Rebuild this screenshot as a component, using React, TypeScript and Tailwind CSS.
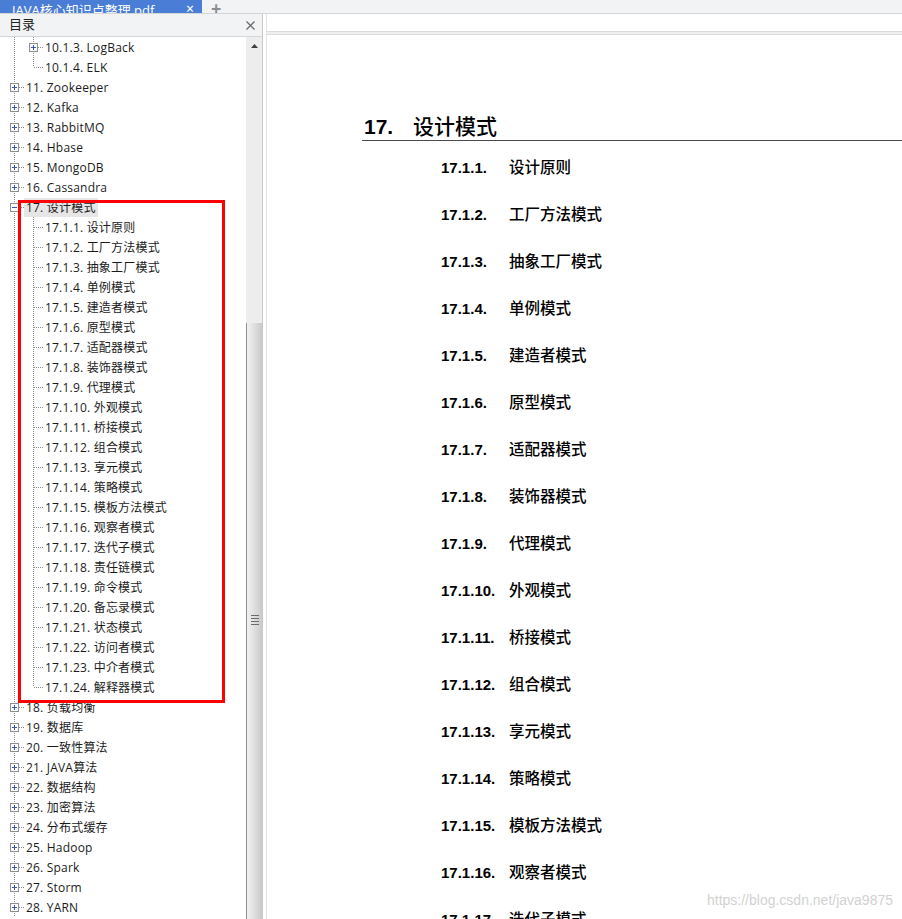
import type { ReactNode } from "react";

const subs = [
  "设计原则",
  "工厂方法模式",
  "抽象工厂模式",
  "单例模式",
  "建造者模式",
  "原型模式",
  "适配器模式",
  "装饰器模式",
  "代理模式",
  "外观模式",
  "桥接模式",
  "组合模式",
  "享元模式",
  "策略模式",
  "模板方法模式",
  "观察者模式",
  "迭代子模式",
  "责任链模式",
  "命令模式",
  "备忘录模式",
  "状态模式",
  "访问者模式",
  "中介者模式",
  "解释器模式",
];

const before = ["11. Zookeeper", "12. Kafka", "13. RabbitMQ", "14. Hbase", "15. MongoDB", "16. Cassandra"];
const after = [
  "18. 负载均衡",
  "19. 数据库",
  "20. 一致性算法",
  "21. JAVA算法",
  "22. 数据结构",
  "23. 加密算法",
  "24. 分布式缓存",
  "25. Hadoop",
  "26. Spark",
  "27. Storm",
  "28. YARN",
];

const treeFont = { fontFamily: '"Open Sans", "Noto Sans CJK SC", sans-serif' };
const arial = { fontFamily: '"Liberation Sans", Arial, sans-serif' };
const hei = { fontFamily: '"Noto Sans CJK SC", sans-serif' };

function Box({ x, open }: { x: number; open?: boolean }) {
  return (
    <g>
      <rect x={x + 0.5} y={6.5} width={8} height={8} fill="#fbfbfb" stroke="#8e8f94" />
      <line x1={x + 2} y1={10.5} x2={x + 7} y2={10.5} stroke="#3c55a8" />
      {!open && <line x1={x + 4.5} y1={8} x2={x + 4.5} y2={13} stroke="#3c55a8" />}
    </g>
  );
}

function Gutter({ level, expander, last }: { level: 0 | 1; expander?: "+" | "-"; last?: boolean }) {
  const w = level === 0 ? 26 : 45;
  const dot = { stroke: "#8a8a8a", strokeDasharray: "1 1" };
  return (
    <svg width={w} height={20} className="shrink-0">
      <line x1={14.5} y1={0} x2={14.5} y2={20} {...dot} />
      {level === 0 && <line x1={19} y1={10.5} x2={25} y2={10.5} {...dot} />}
      {level === 0 && expander && <Box x={10} open={expander === "-"} />}
      {level === 1 && (
        <>
          <line x1={33.5} y1={0} x2={33.5} y2={last ? 10 : 20} {...dot} />
          <line x1={34} y1={10.5} x2={44} y2={10.5} {...dot} />
          {expander && <Box x={29} />}
        </>
      )}
    </svg>
  );
}

function Row({ children, gutter, selected }: { children: ReactNode; gutter: ReactNode; selected?: boolean }) {
  return (
    <div className="flex h-[20px] items-center text-[12px] text-[#1b1b1b]">
      {gutter}
      <span
        className={
          selected
            ? "-ml-[2px] bg-[#e6e6e6] px-[2px] leading-[19px] tracking-[0.2px]"
            : "leading-[19px] tracking-[0.2px]"
        }
      >
        {children}
      </span>
    </div>
  );
}

function Sidebar() {
  return (
    <div className="flex w-[263px] shrink-0 flex-col border-r border-[#c9c9c9] bg-white">
      <div className="flex h-[23px] items-center justify-between border-b border-[#d6d7da] bg-[#f2f3f5] pl-[9px] pr-[7px]">
        <span className="text-[13px] text-[#222]" style={treeFont}>
          目录
        </span>
        <svg width="9" height="9" viewBox="0 0 9 9">
          <path d="M0.5 0.5 L8.5 8.5 M8.5 0.5 L0.5 8.5" stroke="#6b6b6b" strokeWidth="1.3" />
        </svg>
      </div>
      <div className="flex min-h-0 flex-1">
        <div className="relative flex-1 overflow-hidden" style={treeFont}>
          <Row gutter={<Gutter level={1} expander="+" />}>10.1.3. LogBack</Row>
          <Row gutter={<Gutter level={1} last />}>10.1.4. ELK</Row>
          {before.map((t) => (
            <Row key={t} gutter={<Gutter level={0} expander="+" />}>
              {t}
            </Row>
          ))}
          <Row gutter={<Gutter level={0} expander="-" />} selected>
            17. 设计模式
          </Row>
          {subs.map((t, i) => (
            <Row key={t} gutter={<Gutter level={1} last={i === subs.length - 1} />}>
              17.1.{i + 1}. {t}
            </Row>
          ))}
          {after.map((t) => (
            <Row key={t} gutter={<Gutter level={0} expander="+" />}>
              {t}
            </Row>
          ))}
          <div className="absolute left-[18px] top-[163px] h-[503px] w-[207px] border-[3px] border-[#ff0000]" />
        </div>
        <div className="flex w-[16px] shrink-0 flex-col bg-[#ededed]">
          <div className="flex h-[18px] items-center justify-center">
            <svg width="7" height="4" viewBox="0 0 7 4">
              <path d="M0 4 L3.5 0 L7 4 Z" fill="#3f3f3f" />
            </svg>
          </div>
          <div className="h-[268px]" />
          <div className="flex flex-1 flex-col items-center justify-start border-l border-[#8f8f8f] bg-gradient-to-r from-[#f2f2f2] via-[#dedede] to-[#c9c9c9] pt-[292px]">
            <div className="flex w-[8px] flex-col gap-[2px]">
              <div className="h-[1px] bg-[#6a6a6a]" />
              <div className="h-[1px] bg-[#6a6a6a]" />
              <div className="h-[1px] bg-[#6a6a6a]" />
              <div className="h-[1px] bg-[#6a6a6a]" />
            </div>
          </div>
        </div>
      </div>
    </div>
  );
}

function Content() {
  const nums = Array.from({ length: 17 }, (_, i) => i);
  return (
    <div className="relative flex min-w-0 flex-1 flex-col border-l-[3px] border-white">
      <div className="h-[17px] border-l border-[#e3e3e3] bg-white" />
      <div className="h-[4px] border-y border-[#dcdcdc] bg-[#efefef]" />
      <div className="flex-1 overflow-hidden border-l border-[#e3e3e3] bg-white pl-[95px] pt-[77px]">
        <div className="flex h-[29px] items-center border-b border-[#4a4a4a] pl-[2px] text-black">
          <div className="flex items-baseline">
            <span className="w-[49px] text-[21px] font-bold" style={arial}>
              17.
            </span>
            <span className="text-[21px] font-medium" style={hei}>
              设计模式
            </span>
          </div>
        </div>
        <div className="mt-[3px] flex flex-col pl-[79px]">
          {nums.map((i) => (
            <div key={i} className="flex h-[47px] items-center text-black">
              <div className="flex items-baseline">
                <span className="w-[68px] text-[15px] font-bold" style={arial}>
                  17.1.{i + 1}.
                </span>
                <span className="text-[15.5px] font-medium" style={hei}>
                  {subs[i]}
                </span>
              </div>
            </div>
          ))}
        </div>
      </div>
      <div className="absolute bottom-[8px] right-[9px] text-[14px] text-[#d2d2d2]" style={arial}>
        https://blog.csdn.net/java9875
      </div>
    </div>
  );
}

export default function App() {
  return (
    <div className="flex h-[919px] w-[902px] flex-col overflow-hidden bg-white">
      <div className="flex h-[14px] shrink-0 items-stretch overflow-hidden border-b border-[#d4d5d8] bg-[#f2f3f5]">
        <div className="flex w-[202px] items-end justify-between bg-[#4a7dd6] pl-[12px] pr-[8px] text-white">
          <span className="-mb-[5px] text-[13px] leading-[16px]" style={treeFont}>
            JAVA核心知识点整理.pdf
          </span>
          <span className="-mb-[3px] text-[14px] leading-[14px]">×</span>
        </div>
        <div className="flex items-end pl-[9px]">
          <span className="-mb-[3px] text-[18px] font-bold leading-[16px] text-[#8a8d93]">+</span>
        </div>
      </div>
      <div className="flex min-h-0 flex-1">
        <Sidebar />
        <Content />
      </div>
    </div>
  );
}
